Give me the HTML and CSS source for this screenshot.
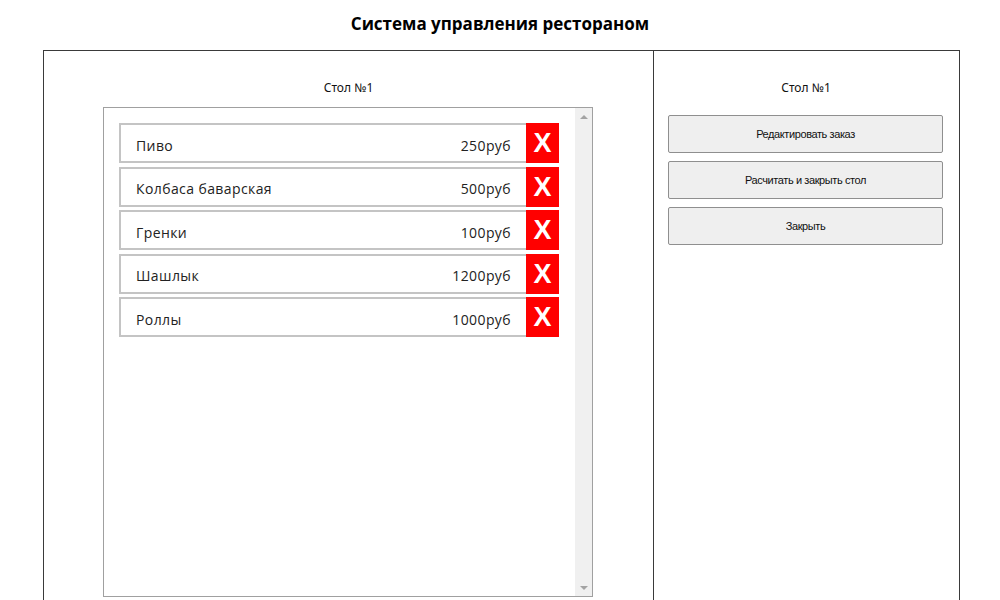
FILE: index.html
```html
<!DOCTYPE html>
<html lang="ru">
<head>
<meta charset="utf-8">
<title>Система управления рестораном</title>
<link rel="stylesheet" href="styles.css">
</head>
<body>
<header class="header">
  <h1 class="title">Система управления рестораном</h1>
</header>
<main class="frame">
  <section class="panel panel-left">
    <div class="panel-title">Стол №1</div>
    <div class="listbox">
      <div class="list">
        <div class="item"><div class="item-body"><span class="item-name">Пиво</span><span class="item-price">250руб</span></div><button class="item-del">X</button></div>
        <div class="item"><div class="item-body"><span class="item-name">Колбаса баварская</span><span class="item-price">500руб</span></div><button class="item-del">X</button></div>
        <div class="item"><div class="item-body"><span class="item-name">Гренки</span><span class="item-price">100руб</span></div><button class="item-del">X</button></div>
        <div class="item"><div class="item-body"><span class="item-name">Шашлык</span><span class="item-price">1200руб</span></div><button class="item-del">X</button></div>
        <div class="item"><div class="item-body"><span class="item-name">Роллы</span><span class="item-price">1000руб</span></div><button class="item-del">X</button></div>
      </div>
      <div class="scrollbar">
        <span class="arrow arrow-up"></span>
        <span class="arrow arrow-down"></span>
      </div>
    </div>
  </section>
  <section class="panel panel-right">
    <div class="panel-title">Стол №1</div>
    <div class="actions">
      <button class="action">Редактировать заказ</button>
      <button class="action">Расчитать и закрыть стол</button>
      <button class="action">Закрыть</button>
    </div>
  </section>
</main>
</body>
</html>
```

FILE: styles.css
```css
* { box-sizing: border-box; }
html, body { margin: 0; padding: 0; background: #fff; }
body {
  width: 1000px;
  height: 600px;
  overflow: hidden;
  font-family: "Open Sans", "Noto Sans", sans-serif;
  color: #000;
}
.header {
  height: 50px;
  display: flex;
  align-items: center;
  justify-content: center;
}
.title {
  margin: 0;
  font-family: "Open Sans", "Noto Sans", sans-serif;
  font-size: 17px;
  font-weight: 700;
  line-height: 24px;
  padding-bottom: 2px;
}
.frame {
  margin-left: 43px;
  width: 917px;
  height: 550px;
  border: 1px solid #3a3a3a;
  border-bottom: none;
  display: flex;
}
.panel { display: flex; flex-direction: column; }
.panel-left {
  width: 610px;
  border-right: 1px solid #3a3a3a;
  padding-left: 59px;
}
.panel-right {
  flex: 1;
  padding: 0 15px 0 14px;
}
.panel-title {
  font-family: "Noto Sans", "Open Sans", sans-serif;
  font-size: 12px;
  line-height: 16px;
  text-align: center;
  margin-top: 29px;
  height: 16px;
  color: #111;
}
.panel-left .panel-title { margin-right: 59px; }
.listbox {
  margin-top: 11px;
  width: 490px;
  height: 490px;
  border: 1px solid #a0a0a0;
  display: flex;
}
.list {
  flex: 1;
  padding: 15px 16px 0 15px;
  display: flex;
  flex-direction: column;
  gap: 3.5px;
}
.item {
  display: flex;
  height: 40px;
}
.item-body {
  flex: 1;
  display: flex;
  align-items: center;
  justify-content: space-between;
  border: 2px solid #c4c4c4;
  border-right: none;
  padding: 4px 15px 0 15px;
  font-size: 14px;
  letter-spacing: 0.4px;
  color: #222;
}
.item-del {
  width: 33px;
  height: 40px;
  margin: 0;
  padding: 0;
  border: none;
  background: #ff0000;
  color: #fff;
  font-family: "Liberation Sans", Arial, sans-serif;
  font-weight: 700;
  font-size: 27px;
  line-height: 40px;
  padding-bottom: 4px;
}
.scrollbar {
  width: 17px;
  background: #f0f0f0;
  display: flex;
  flex-direction: column;
  justify-content: space-between;
  align-items: center;
  padding: 7px 0 6px;
}
.arrow {
  width: 0;
  height: 0;
  border-left: 4px solid transparent;
  border-right: 4px solid transparent;
}
.arrow-up { border-bottom: 4px solid #a3a3a3; }
.arrow-down { border-top: 4px solid #a3a3a3; }
.actions {
  margin-top: 19px;
  display: flex;
  flex-direction: column;
  gap: 8px;
}
.action {
  height: 38px;
  width: 275px;
  margin: 0;
  border: 1px solid #8f8f8f;
  border-radius: 2px;
  background: #efefef;
  font-family: "Liberation Sans", Arial, sans-serif;
  font-size: 11px;
  letter-spacing: -0.4px;
  color: #111;
}
```
